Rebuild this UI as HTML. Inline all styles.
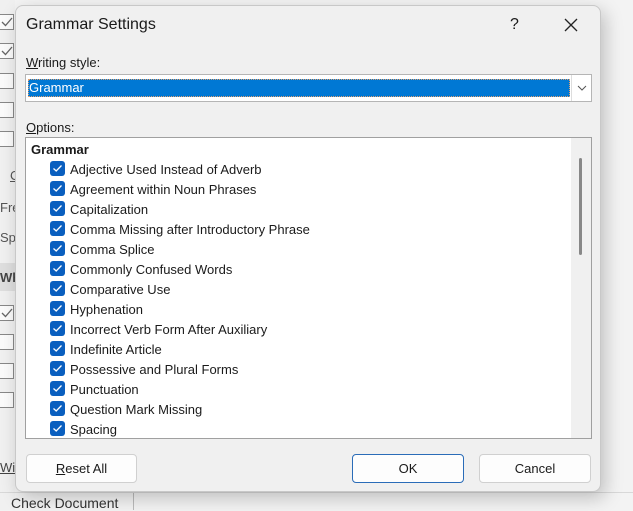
<!DOCTYPE html>
<html><head><meta charset="utf-8"><style>
*{margin:0;padding:0;box-sizing:border-box}
body{width:633px;height:510px;overflow:hidden;background:#f3f3f3;font-family:"Liberation Sans",sans-serif;position:relative;color:#1a1a1a}
.abs{position:absolute}
.bgcb{position:absolute;left:-2px;width:16px;height:16px;border:1px solid #888;background:#fbfbfb}
.bgcb svg{position:absolute;left:2px;top:2px}
.dlg{position:absolute;left:15px;top:5px;width:586px;height:487px;background:#f0f0f0;border:1px solid #c8c8c8;border-radius:8px;box-shadow:4px 6px 18px rgba(0,0,0,.22)}
.t{position:absolute;font-size:13px;white-space:nowrap}
.cb{position:absolute;left:24px;width:15px;height:15px;background:#0a5fbf;border-radius:3px}
.cb svg{position:absolute;left:2px;top:3px}
.btn{position:absolute;top:448px;height:29px;background:#fdfdfd;border:1px solid #d0d0d0;border-radius:4px;font-size:13px;text-align:center;line-height:27px}
</style></head><body>
<div class="abs" style="left:0;top:0;width:15px;height:510px;background:#f0f0f0"></div>
<div class="bgcb" style="top:14px"><svg width="12" height="10"><path d="M1 5L4.5 8.5L11 1" stroke="#666" stroke-width="1.3" fill="none"/></svg></div>
<div class="bgcb" style="top:43px"><svg width="12" height="10"><path d="M1 5L4.5 8.5L11 1" stroke="#666" stroke-width="1.3" fill="none"/></svg></div>
<div class="bgcb" style="top:73px"></div>
<div class="bgcb" style="top:102px"></div>
<div class="bgcb" style="top:131px"></div>
<div class="bgcb" style="top:305px"><svg width="12" height="10"><path d="M1 5L4.5 8.5L11 1" stroke="#666" stroke-width="1.3" fill="none"/></svg></div>
<div class="bgcb" style="top:334px"></div>
<div class="bgcb" style="top:363px"></div>
<div class="bgcb" style="top:392px"></div>
<div class="t" style="left:10px;top:168px;color:#555;text-decoration:underline">C</div>
<div class="t" style="left:0;top:200px;color:#555">Fre</div>
<div class="t" style="left:0;top:230px;color:#555">Sp</div>
<div class="abs" style="left:0;top:263px;width:15px;height:28px;background:#dedede"></div>
<div class="t" style="left:0;top:270px;font-weight:bold;color:#444">Wh</div>
<div class="t" style="left:0;top:460px;text-decoration:underline;color:#444">Wi</div>
<div class="t" style="left:11px;top:495px;font-size:14px;color:#333">Check Document</div>
<div class="abs" style="left:133px;top:492px;width:1px;height:18px;background:#bbb"></div>
<div class="abs" style="left:0;top:492px;width:633px;height:1px;background:#d8d8d8"></div>

<div class="dlg">
 <div class="t" style="left:10px;top:10px;font-size:16px">Grammar Settings</div>
 <div class="t" style="left:494px;top:10px;font-size:16px">?</div>
 <svg class="abs" style="left:548px;top:12px" width="14" height="14"><path d="M1 1L13 13M13 1L1 13" stroke="#222" stroke-width="1.3"/></svg>
 <div class="t" style="left:10px;top:49px"><u>W</u>riting style:</div>
 <div class="abs" style="left:9px;top:68px;width:567px;height:28px;background:#fff;border:1px solid #b5b5b5">
  <div class="abs" style="left:2px;top:4px;width:542px;height:18px;background:#0078d4;outline:1px dotted #e0a070;outline-offset:-1px"></div>
  <div class="t" style="left:3px;top:5px;color:#fff">Grammar</div>
  <div class="abs" style="left:545px;top:0;width:21px;height:26px;border-left:1px solid #ddd"></div>
  <svg class="abs" style="left:551px;top:10px" width="10" height="6"><path d="M1 1L5 5L9 1" stroke="#555" fill="none"/></svg>
 </div>
 <div class="t" style="left:10px;top:114px"><u>O</u>ptions:</div>
 <div class="abs" style="left:9px;top:131px;width:567px;height:302px;background:#fff;border:1px solid #a0a0a0">
  <div class="abs" style="left:545px;top:0;width:20px;height:300px;background:#f0f0f0"></div>
  <div class="abs" style="left:553px;top:20px;width:3px;height:97px;background:#888;border-radius:2px"></div>
  <div class="t" style="left:5px;top:4px;font-weight:bold">Grammar</div>
 </div>
 <div class="btn" style="left:10px;width:111px"><u>R</u>eset All</div>
 <div class="btn" style="left:336px;width:112px;border:1px solid #2a6cb8">OK</div>
 <div class="btn" style="left:463px;width:112px">Cancel</div>
</div>
<div style="position:absolute;left:26px;top:0;width:545px;height:437px;overflow:hidden;clip-path:inset(138px 0 0 0)">
 <div class="cb" style="top:161px"><svg width="11" height="9"><path d="M1.5 4.5L4.2 7L9.5 1.5" stroke="#fff" stroke-width="1.3" fill="none"/></svg></div><div class="t" style="left:44px;top:162px">Adjective Used Instead of Adverb</div>
 <div class="cb" style="top:181px"><svg width="11" height="9"><path d="M1.5 4.5L4.2 7L9.5 1.5" stroke="#fff" stroke-width="1.3" fill="none"/></svg></div><div class="t" style="left:44px;top:182px">Agreement within Noun Phrases</div>
 <div class="cb" style="top:201px"><svg width="11" height="9"><path d="M1.5 4.5L4.2 7L9.5 1.5" stroke="#fff" stroke-width="1.3" fill="none"/></svg></div><div class="t" style="left:44px;top:202px">Capitalization</div>
 <div class="cb" style="top:221px"><svg width="11" height="9"><path d="M1.5 4.5L4.2 7L9.5 1.5" stroke="#fff" stroke-width="1.3" fill="none"/></svg></div><div class="t" style="left:44px;top:222px">Comma Missing after Introductory Phrase</div>
 <div class="cb" style="top:241px"><svg width="11" height="9"><path d="M1.5 4.5L4.2 7L9.5 1.5" stroke="#fff" stroke-width="1.3" fill="none"/></svg></div><div class="t" style="left:44px;top:242px">Comma Splice</div>
 <div class="cb" style="top:261px"><svg width="11" height="9"><path d="M1.5 4.5L4.2 7L9.5 1.5" stroke="#fff" stroke-width="1.3" fill="none"/></svg></div><div class="t" style="left:44px;top:262px">Commonly Confused Words</div>
 <div class="cb" style="top:281px"><svg width="11" height="9"><path d="M1.5 4.5L4.2 7L9.5 1.5" stroke="#fff" stroke-width="1.3" fill="none"/></svg></div><div class="t" style="left:44px;top:282px">Comparative Use</div>
 <div class="cb" style="top:301px"><svg width="11" height="9"><path d="M1.5 4.5L4.2 7L9.5 1.5" stroke="#fff" stroke-width="1.3" fill="none"/></svg></div><div class="t" style="left:44px;top:302px">Hyphenation</div>
 <div class="cb" style="top:321px"><svg width="11" height="9"><path d="M1.5 4.5L4.2 7L9.5 1.5" stroke="#fff" stroke-width="1.3" fill="none"/></svg></div><div class="t" style="left:44px;top:322px">Incorrect Verb Form After Auxiliary</div>
 <div class="cb" style="top:341px"><svg width="11" height="9"><path d="M1.5 4.5L4.2 7L9.5 1.5" stroke="#fff" stroke-width="1.3" fill="none"/></svg></div><div class="t" style="left:44px;top:342px">Indefinite Article</div>
 <div class="cb" style="top:361px"><svg width="11" height="9"><path d="M1.5 4.5L4.2 7L9.5 1.5" stroke="#fff" stroke-width="1.3" fill="none"/></svg></div><div class="t" style="left:44px;top:362px">Possessive and Plural Forms</div>
 <div class="cb" style="top:381px"><svg width="11" height="9"><path d="M1.5 4.5L4.2 7L9.5 1.5" stroke="#fff" stroke-width="1.3" fill="none"/></svg></div><div class="t" style="left:44px;top:382px">Punctuation</div>
 <div class="cb" style="top:401px"><svg width="11" height="9"><path d="M1.5 4.5L4.2 7L9.5 1.5" stroke="#fff" stroke-width="1.3" fill="none"/></svg></div><div class="t" style="left:44px;top:402px">Question Mark Missing</div>
 <div class="cb" style="top:421px"><svg width="11" height="9"><path d="M1.5 4.5L4.2 7L9.5 1.5" stroke="#fff" stroke-width="1.3" fill="none"/></svg></div><div class="t" style="left:44px;top:422px">Spacing</div>
</div>
</body></html>
